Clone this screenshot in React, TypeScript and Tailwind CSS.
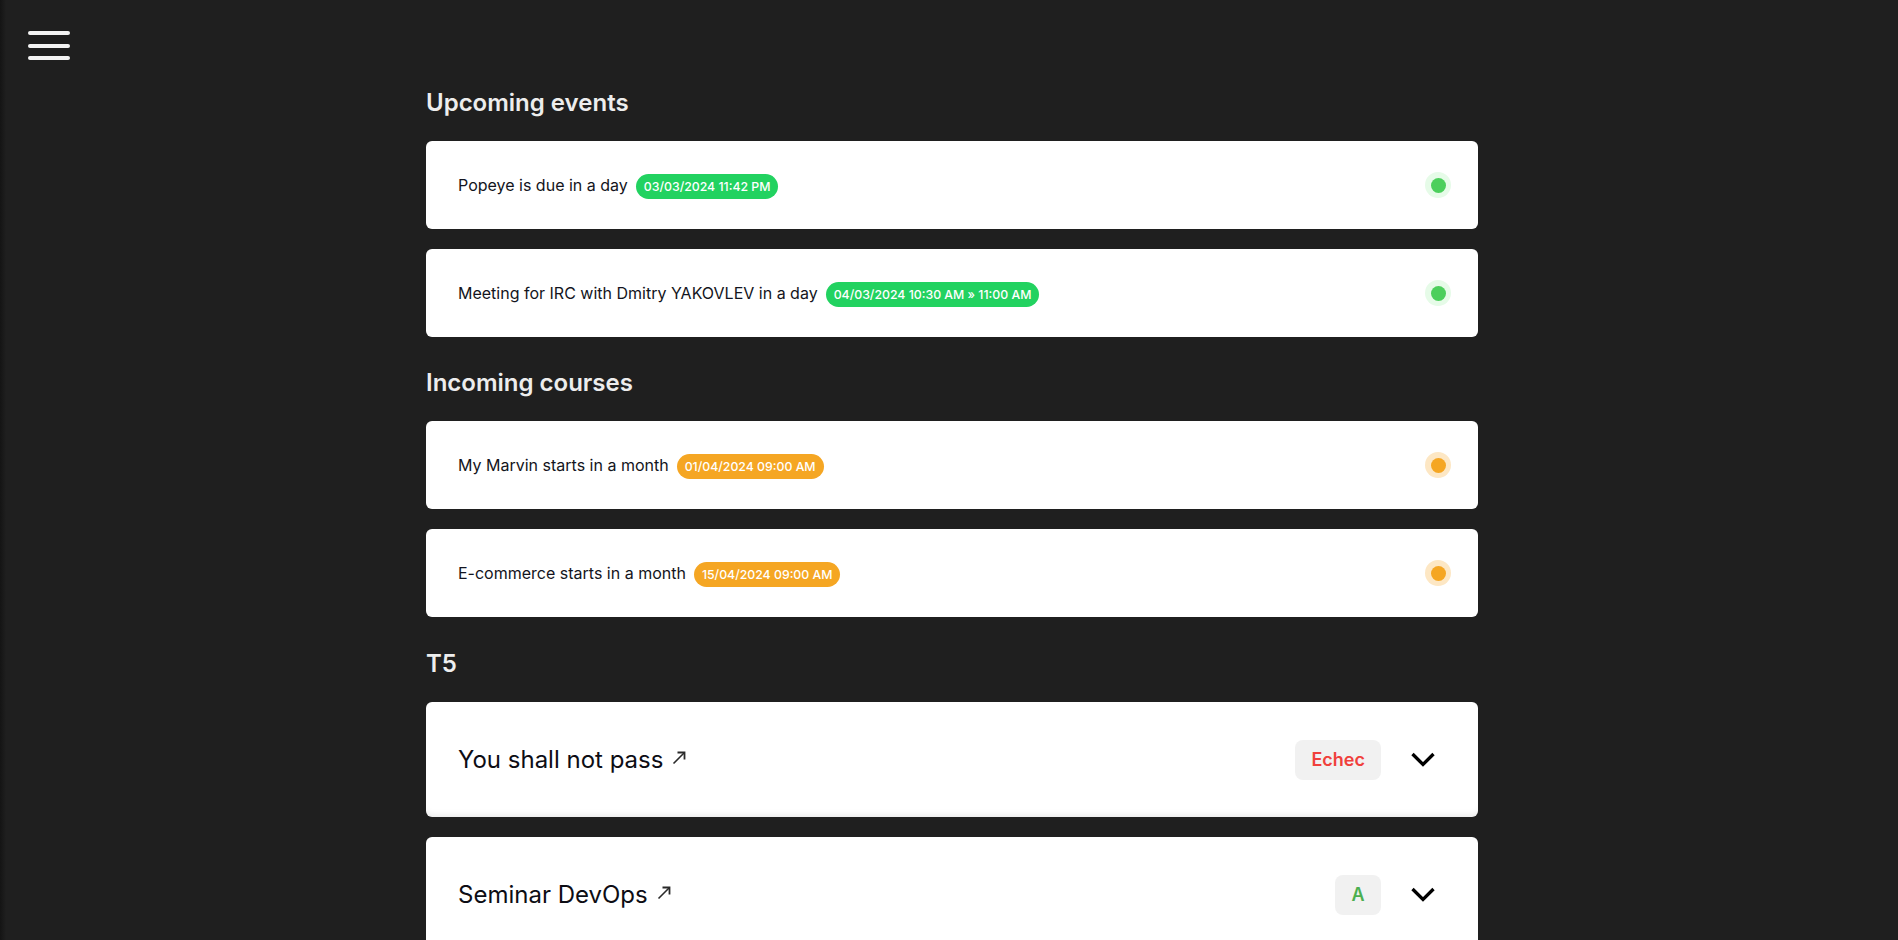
const font = { fontFamily: "Inter, 'Noto Sans', sans-serif" };

type Tone = "green" | "orange";

const tones: Record<Tone, { badge: string; ring: string; dot: string }> = {
  green: { badge: "bg-[#22d260]", ring: "bg-[#e6fbe8]", dot: "bg-[#4ccf5c]" },
  orange: { badge: "bg-[#f5a623]", ring: "bg-[#fde7c4]", dot: "bg-[#f5a623]" },
};

function EventRow({ label, date, tone }: { label: string; date: string; tone: Tone }) {
  const t = tones[tone];
  return (
    <div className="flex h-[88px] items-center justify-between rounded-md bg-white pl-8 pr-[27px]">
      <div className="flex items-center gap-2">
        <span className="text-[16px] text-[#131420]">{label}</span>
        <span
          className={`${t.badge} mt-[2px] rounded-full px-[8px] py-[4px] text-[12.3px] font-medium leading-[17px] text-white`}
        >
          {date}
        </span>
      </div>
      <span className={`${t.ring} flex h-[26px] w-[26px] items-center justify-center rounded-full`}>
        <span className={`${t.dot} h-[15px] w-[15px] rounded-full`} />
      </span>
    </div>
  );
}

function ArrowUpRight() {
  return (
    <svg width="15" height="15" viewBox="0 0 15 15" fill="none" className="mt-[-4px]">
      <path d="M1.5 13.5 L12.5 2.5" stroke="#2a2a2a" strokeWidth="1.6" />
      <path d="M5.5 2.5 H12.5 V9.5" stroke="#2a2a2a" strokeWidth="1.8" />
    </svg>
  );
}

function Chevron() {
  return (
    <svg width="24" height="15" viewBox="0 0 24 15" fill="none">
      <path d="M1.5 2 L12 12.5 L22.5 2" stroke="#000" strokeWidth="3.3" />
    </svg>
  );
}

function CourseRow({ title, grade, gradeClass }: { title: string; grade: string; gradeClass: string }) {
  return (
    <div className="flex h-[115px] items-center justify-between rounded-md bg-white pl-8 pr-[43px] shadow-[inset_0_-7px_7px_-5px_rgba(0,0,0,0.09)]">
      <div className="flex items-center gap-[9px]">
        <span className="text-[24px] text-[#0d0d14]">{title}</span>
        <ArrowUpRight />
      </div>
      <div className="flex items-center gap-[30px]">
        <span
          className={`flex h-10 min-w-[46px] items-center justify-center rounded-lg bg-[#f1f1f1] px-4 text-[18px] font-semibold ${gradeClass}`}
        >
          {grade}
        </span>
        <Chevron />
      </div>
    </div>
  );
}

function Section({ title, children, gap }: { title: string; children: React.ReactNode; gap: string }) {
  return (
    <section className={gap}>
      <h2 className="mb-[22px] text-2xl font-semibold text-[#ededed]">{title}</h2>
      <div className="flex flex-col gap-5">{children}</div>
    </section>
  );
}

export default function App() {
  return (
    <div className="relative flex min-h-[940px] bg-[#1f1f1f]" style={font}>
      <div className="w-[6px] shrink-0 bg-gradient-to-r from-[#141414] to-[#1f1f1f]" />
      <button className="absolute left-[28px] top-[31px] flex flex-col gap-[8.5px]" aria-label="menu">
        <span className="block h-[4px] w-[42px] rounded-full bg-[#f4f4f4]" />
        <span className="block h-[4px] w-[42px] rounded-full bg-[#f4f4f4]" />
        <span className="block h-[4px] w-[42px] rounded-full bg-[#f4f4f4]" />
      </button>
      <main className="flex-1 pt-[87px]">
        <div className="mx-auto w-[1052px]">
          <Section title="Upcoming events" gap="">
            <EventRow label="Popeye is due in a day" date="03/03/2024 11:42 PM" tone="green" />
            <EventRow
              label="Meeting for IRC with Dmitry YAKOVLEV in a day"
              date="04/03/2024 10:30 AM » 11:00 AM"
              tone="green"
            />
          </Section>
          <Section title="Incoming courses" gap="mt-[30px]">
            <EventRow label="My Marvin starts in a month" date="01/04/2024 09:00 AM" tone="orange" />
            <EventRow label="E-commerce starts in a month" date="15/04/2024 09:00 AM" tone="orange" />
          </Section>
          <Section title="T5" gap="mt-[31px]">
            <CourseRow title="You shall not pass" grade="Echec" gradeClass="text-[#f0403c]" />
            <CourseRow title="Seminar DevOps" grade="A" gradeClass="text-[#4caf50]" />
          </Section>
        </div>
      </main>
    </div>
  );
}
